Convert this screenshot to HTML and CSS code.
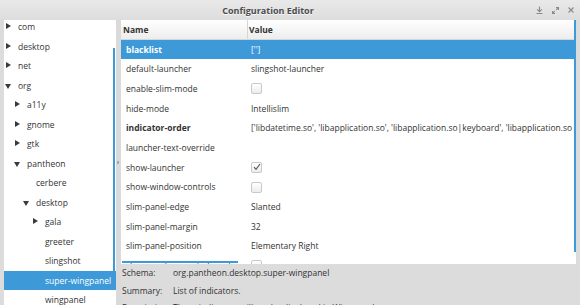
FILE: index.html
```html
<!DOCTYPE html>
<html lang="en">
<head>
<meta charset="UTF-8">
<meta name="viewport" content="width=device-width, initial-scale=1.0">
<title>Configuration Editor</title>
<link rel="stylesheet" href="styles.css">
</head>
<body>
<div class="window">
  <header class="titlebar">
    <span class="title">Configuration Editor</span>
    <div class="controls">
      <svg width="7" height="8" viewBox="0 0 7 8"><path d="M3.5 0.5v5M1.2 3.3l2.3 2.3 2.3-2.3M0.5 7.5h6"/></svg>
      <svg width="7" height="7" viewBox="0 0 7 7"><path d="M4 0.5h2.5V3M6.5 0.5L4.2 2.8M3 6.5H0.5V4M0.5 6.5l2.3-2.3"/></svg>
      <svg width="6" height="6" viewBox="0 0 6 6"><path d="M0.5 0.5l5 5M5.5 0.5l-5 5"/></svg>
    </div>
  </header>

  <div class="panes">
    <aside class="tree">
      <ul class="nodes">
        <li class="node l0 closed"><span class="twisty"></span>com</li>
        <li class="node l0 closed"><span class="twisty"></span>desktop</li>
        <li class="node l0 closed"><span class="twisty"></span>net</li>
        <li class="node l0 open"><span class="twisty"></span>org</li>
        <li class="node l1 closed"><span class="twisty"></span>a11y</li>
        <li class="node l1 closed"><span class="twisty"></span>gnome</li>
        <li class="node l1 closed"><span class="twisty"></span>gtk</li>
        <li class="node l1 open"><span class="twisty"></span>pantheon</li>
        <li class="node l2"><span class="twisty"></span>cerbere</li>
        <li class="node l2 open"><span class="twisty"></span>desktop</li>
        <li class="node l3 closed"><span class="twisty"></span>gala</li>
        <li class="node l3"><span class="twisty"></span>greeter</li>
        <li class="node l3"><span class="twisty"></span>slingshot</li>
        <li class="node l3 selected"><span class="twisty"></span>super-wingpanel</li>
        <li class="node l3"><span class="twisty"></span>wingpanel</li>
      </ul>
      <div class="scroll tree-scroll"></div>
    </aside>

    <div class="handle"><span class="grip"></span></div>

    <section class="main">
      <div class="table">
        <div class="row head"><span class="name">Name</span><span class="value">Value</span></div>
        <div class="row selected changed"><span class="name">blacklist</span><span class="value">['']</span></div>
        <div class="row"><span class="name">default-launcher</span><span class="value">slingshot-launcher</span></div>
        <div class="row"><span class="name">enable-slim-mode</span><span class="value"><span class="check"></span></span></div>
        <div class="row"><span class="name">hide-mode</span><span class="value">Intellislim</span></div>
        <div class="row changed"><span class="name">indicator-order</span><span class="value plain">['libdatetime.so', 'libapplication.so', 'libapplication.so|keyboard', 'libapplication.so|network', 'libapplication.so|power']</span></div>
        <div class="row"><span class="name">launcher-text-override</span><span class="value"></span></div>
        <div class="row"><span class="name">show-launcher</span><span class="value"><span class="check"><svg width="8" height="8" viewBox="0 0 8 8"><path d="M1 4.2l2 2.2L7 1"/></svg></span></span></div>
        <div class="row"><span class="name">show-window-controls</span><span class="value"><span class="check"></span></span></div>
        <div class="row"><span class="name">slim-panel-edge</span><span class="value">Slanted</span></div>
        <div class="row"><span class="name">slim-panel-margin</span><span class="value">32</span></div>
        <div class="row"><span class="name">slim-panel-position</span><span class="value">Elementary Right</span></div>
        <div class="row"><span class="name">slim-panel-separate-launcher</span><span class="value"><span class="check"></span></span></div>
        <div class="scroll table-vscroll"></div>
        <div class="scroll table-hscroll"></div>
      </div>

      <div class="info">
        <div class="info-row"><span class="label">Schema:</span><span>org.pantheon.desktop.super-wingpanel</span></div>
        <div class="info-row"><span class="label">Summary:</span><span>List of indicators.</span></div>
        <div class="info-row"><span class="label">Description:</span><span>These indicators will not be displayed in Wingpanel</span></div>
      </div>
    </section>
  </div>
</div>
</body>
</html>
```

FILE: styles.css
```css
body { margin: 0; font-family: "Open Sans", "DejaVu Sans", sans-serif; font-size: 8.5px; color: #333; }

.window { width: 580px; height: 305px; display: flex; flex-direction: column; overflow: hidden; background: #dcdcdc; }

/* title bar */
.titlebar { height: 20px; flex: none; display: flex; align-items: center; background: linear-gradient(#e9e9e9, #dddddd); }
.title { flex: 1; text-align: center; font-size: 9px; font-weight: bold; color: #4d4d4d; text-shadow: 0 1px #f6f6f6; }
.controls { display: flex; align-items: center; gap: 9px; padding-right: 6px; }
.controls svg { fill: none; stroke: #8a8a8a; stroke-width: 1.1; }

.panes { flex: 1; display: flex; min-height: 0; }

/* left tree */
.tree { width: 112px; margin-left: 4px; flex: none; background: #fff; position: relative; overflow: hidden; }
.nodes { list-style: none; margin: -3px 0 0; padding: 0; }
.node { height: 19.5px; line-height: 19.5px; display: flex; align-items: center; white-space: nowrap; }
.node.l0 { padding-left: 0; }
.node.l1 { padding-left: 9px; }
.node.l2 { padding-left: 18px; }
.node.l3 { padding-left: 27px; }
.node.selected { background: #3d99d8; color: #fff; }
.twisty { width: 14px; height: 19.5px; flex: none; position: relative; }
.closed .twisty::before { content: ""; position: absolute; left: 2px; top: 6px; border-left: 5px solid #3a3a3a; border-top: 3.5px solid transparent; border-bottom: 3.5px solid transparent; }
.open .twisty::before { content: ""; position: absolute; left: 1px; top: 8px; border-top: 5px solid #3a3a3a; border-left: 3.5px solid transparent; border-right: 3.5px solid transparent; }

.scroll { position: absolute; background: #3d99d8; }
.tree-scroll { right: 1px; top: 28px; width: 2px; height: 242px; }

.handle { width: 5px; flex: none; background: #dadada; display: flex; align-items: center; }
.grip { width: 2px; height: 3px; margin-left: 1px; background: #a8a8a8; }

/* right side */
.main { flex: 1; min-width: 0; display: flex; flex-direction: column; }
.table { flex: 1; margin-right: 4px; background: #fff; position: relative; overflow: hidden; }
.row { height: 19.7px; line-height: 19.7px; display: flex; white-space: nowrap; }
.row .name { width: 121px; flex: none; padding-left: 5px; }
.row .value { flex: 1; padding-left: 4px; overflow: hidden; display: flex; align-items: center; }
.row .value.plain { display: block; }
.row.head { height: 19.5px; line-height: 19.5px; background: linear-gradient(#ffffff, #ececec); box-shadow: inset 0 -1px #d6d6d6; font-weight: bold; color: #333; }
.row.head .name { padding-left: 2px; width: 124px; }
.row.head .value { border-left: 1px solid #d6d6d6; padding-left: 1px; }
.row.changed .name { font-weight: bold; }
.row.selected { background: #3d99d8; color: #fff; }

.check { width: 9px; height: 9px; border: 1px solid #c9c9c9; border-radius: 2px; background: linear-gradient(#ffffff, #ececec); display: flex; align-items: center; justify-content: center; }
.check svg { fill: none; stroke: #5a5a5a; stroke-width: 1.2; }

.table-vscroll { right: 0; top: 0; width: 2px; height: 232px; }
.table-hscroll { left: 1px; bottom: 1px; width: 116px; height: 2px; }

/* info panel */
.info { height: 41px; flex: none; background: #dcdcdc; padding: 0.5px 0 0 1px; }
.info-row { height: 17.5px; line-height: 17.5px; display: flex; white-space: nowrap; }
.info-row .label { width: 51px; flex: none; }
```
